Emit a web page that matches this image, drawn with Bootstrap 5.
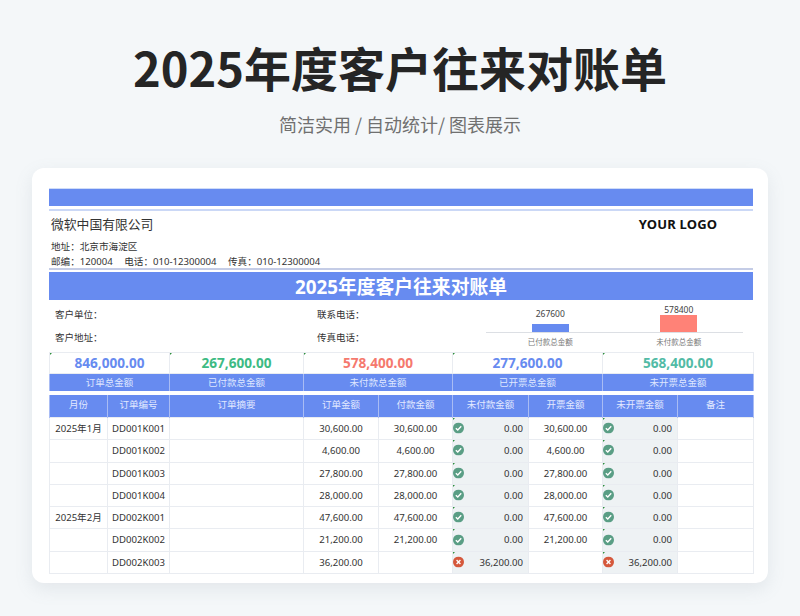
<!DOCTYPE html>
<html lang="zh-CN">
<head>
<meta charset="utf-8">
<title>2025年度客户往来对账单</title>
<link rel="stylesheet" href="https://cdn.jsdelivr.net/npm/bootstrap@5.3.0/dist/css/bootstrap.min.css">
<style>
html,body{height:616px;overflow:hidden}
body{background:#f4f7f9;font-family:"Noto Sans","Noto Sans CJK SC",sans-serif;color:#333}
.hero-title{font-family:"Noto Sans CJK SC",sans-serif;font-size:47px;font-weight:700;line-height:60px;color:#252525;margin:0;padding-top:37px}
.hero-sub{font-family:"Noto Sans CJK SC",sans-serif;font-size:18px;line-height:26px;color:#707070;margin:14px 0 0}
.sheet-card{width:736px;height:415px;margin:31px auto 0;background:#fff;border-radius:12px;box-shadow:0 6px 18px rgba(120,135,150,.14);padding:20px 15px 0 17px}
.top-bar{height:18px;background:#678bf0;border:solid #cfdcf8;border-width:1px 0 0}
.thin-rule{height:2px;margin-top:3px;background:#cbd8f6}
.co-row{height:59px;border-bottom:2px solid #c4cce6}
.co-name{font-size:12.8px;line-height:18px;padding:4px 0 0 2px;color:#333}
.co-line{font-size:9.6px;line-height:15px;padding-left:2px;color:#333}
.co-addr{margin-top:6px}
.co-line span{margin-right:11.5px}
.logo-text{font-size:13px;font-weight:700;color:#111;width:150px;text-align:center;padding:4px 0 0;letter-spacing:.2px}
.doc-title{height:28px;margin-top:2px;background:#678bf0;color:#fff;font-size:18.8px;font-weight:700;line-height:30px;text-align:center}
.info-zone{height:52px}
.info-cols{width:437px;font-size:9.5px;line-height:14px;color:#333}
.info-col-a{width:268px;padding-left:6px}
.info-row{height:23px;padding-top:8px}
.mini-chart{width:257px;height:52px}
.chart-plot{height:33px;border-bottom:1px solid #dcdfe4;align-items:flex-end}
.chart-col{width:50%;text-align:center;font-size:8.5px;line-height:11px;color:#444}
.chart-bar{width:37px;margin:0 auto;display:block}
.bar-paid{height:8px;background:#678bf0;margin-top:5px}
.bar-unpaid{height:17px;background:#ff8277}
.chart-cap{width:50%;text-align:center;font-size:7.5px;line-height:11px;color:#777;padding-top:4px}
.ledger{table-layout:fixed;width:704px;border-collapse:collapse;margin:0;font-size:9.5px}
.ledger td{border:1px solid #e9ecf1;padding:0;font-weight:400;position:relative;vertical-align:middle}
.ledger .kpi-cell{height:21px;text-align:center;font-size:13.6px;font-weight:700;line-height:20px}
.kpi-blue{color:#678bf0}.kpi-green{color:#3dbb84}.kpi-red{color:#f5796e}.kpi-teal{color:#52bba6}
.ledger .kpi-label{height:17px;background:#678bf0;color:#dfe7ff;text-align:center;border-color:#a9bcf4;border-top:0;border-bottom:0;line-height:15px;font-size:9.5px}
.ledger .spacer-row td{height:4px;border:0}
.ledger .head-cell{height:23px;padding-bottom:1px;background:#678bf0;color:#e3e9ff;text-align:center;border-color:#a9bcf4;border-top:0;border-bottom:0;font-size:9.5px}
.ledger td.body-cell{height:22.3px;padding-top:1px;font-size:9.6px;color:#333;white-space:nowrap}
.ctr,.num-c{text-align:center}
.ledger td.rgt{text-align:right;padding-right:5px}
.ledger td.status-cell{background:#eef2f4}
.status-cell svg{position:absolute;left:0;top:calc(50% - .5px);transform:translateY(-50%)}
.ledger td.tick::before{content:"";position:absolute;left:0;top:0;border-style:solid;border-width:2px 2px 0 0;border-color:#2f8f3f transparent transparent transparent}
</style>
</head>
<body>
<header class="text-center">
  <h1 class="hero-title">2025年度客户往来对账单</h1>
  <p class="hero-sub">简洁实用 / 自动统计/ 图表展示</p>
</header>
<main class="sheet-card">
  <div class="top-bar"></div>
  <div class="thin-rule"></div>
  <div class="co-row d-flex justify-content-between">
    <div>
      <div class="co-name">微软中国有限公司</div>
      <div class="co-line co-addr">地址：北京市海淀区</div>
      <div class="co-line"><span>邮编：120004</span><span>电话：010-12300004</span><span>传真：010-12300004</span></div>
    </div>
    <div class="logo-text">YOUR LOGO</div>
  </div>
  <div class="doc-title">2025年度客户往来对账单</div>
  <div class="info-zone d-flex">
    <div class="info-cols d-flex">
      <div class="info-col-a"><div class="info-row">客户单位：</div><div class="info-row">客户地址：</div></div>
      <div><div class="info-row">联系电话：</div><div class="info-row">传真电话：</div></div>
    </div>
    <div class="mini-chart">
      <div class="chart-plot d-flex">
        <div class="chart-col">267600<span class="chart-bar bar-paid"></span></div>
        <div class="chart-col">578400<span class="chart-bar bar-unpaid"></span></div>
      </div>
      <div class="d-flex"><div class="chart-cap">已付款总金额</div><div class="chart-cap">未付款总金额</div></div>
    </div>
  </div>
  <table class="ledger">
    <colgroup><col style="width:58px"><col style="width:62px"><col style="width:134px"><col style="width:75px"><col style="width:74px"><col style="width:76px"><col style="width:74px"><col style="width:75px"><col style="width:76px"></colgroup>
    <tbody id="ledger-body">
      <tr>
        <td colspan="2" class="kpi-cell kpi-blue tick">846,000.00</td>
        <td class="kpi-cell kpi-green tick">267,600.00</td>
        <td colspan="2" class="kpi-cell kpi-red tick">578,400.00</td>
        <td colspan="2" class="kpi-cell kpi-blue tick">277,600.00</td>
        <td colspan="2" class="kpi-cell kpi-teal tick">568,400.00</td>
      </tr>
      <tr>
        <td colspan="2" class="kpi-label">订单总金额</td>
        <td class="kpi-label">已付款总金额</td>
        <td colspan="2" class="kpi-label">未付款总金额</td>
        <td colspan="2" class="kpi-label">已开票总金额</td>
        <td colspan="2" class="kpi-label">未开票总金额</td>
      </tr>
      <tr class="spacer-row"><td colspan="9"></td></tr>
      <tr>
        <td class="head-cell">月份</td><td class="head-cell">订单编号</td><td class="head-cell">订单摘要</td><td class="head-cell">订单金额</td><td class="head-cell">付款金额</td><td class="head-cell">未付款金额</td><td class="head-cell">开票金额</td><td class="head-cell">未开票金额</td><td class="head-cell">备注</td>
      </tr>
    </tbody>
  </table>
</main>
<script src="https://cdn.jsdelivr.net/npm/bootstrap@5.3.0/dist/js/bootstrap.bundle.min.js"></script>
<script>
const ok='<svg width="11" height="11" viewBox="0 0 12 12" aria-hidden="true"><circle cx="6" cy="6" r="6" fill="#5a9e85"/><path d="M3.1 6.2 5.2 8.2 9 4.1" fill="none" stroke="#fff" stroke-width="1.5"/></svg>';
const bad='<svg width="11" height="11" viewBox="0 0 12 12" aria-hidden="true"><circle cx="6" cy="6" r="6" fill="#d5583c"/><path d="M3.9 3.9 8.1 8.1M8.1 3.9 3.9 8.1" fill="none" stroke="#fff" stroke-width="1.5"/></svg>';
const rows=[
['2025年1月','DD001K001','30,600.00','30,600.00','0.00','30,600.00','0.00'],
['','DD001K002','4,600.00','4,600.00','0.00','4,600.00','0.00'],
['','DD001K003','27,800.00','27,800.00','0.00','27,800.00','0.00'],
['','DD001K004','28,000.00','28,000.00','0.00','28,000.00','0.00'],
['2025年2月','DD002K001','47,600.00','47,600.00','0.00','47,600.00','0.00'],
['','DD002K002','21,200.00','21,200.00','0.00','21,200.00','0.00'],
['','DD002K003','36,200.00','','36,200.00','','36,200.00']];
const st=v=>`<td class="body-cell status-cell rgt tick">${v==='0.00'?ok:bad}${v}</td>`;
document.getElementById('ledger-body').insertAdjacentHTML('beforeend',rows.map(r=>`<tr><td class="body-cell ctr">${r[0]}</td><td class="body-cell ctr">${r[1]}</td><td class="body-cell"></td><td class="body-cell num-c">${r[2]}</td><td class="body-cell num-c">${r[3]}</td>${st(r[4])}<td class="body-cell num-c">${r[5]}</td>${st(r[6])}<td class="body-cell"></td></tr>`).join(''));
</script>
</body>
</html>
